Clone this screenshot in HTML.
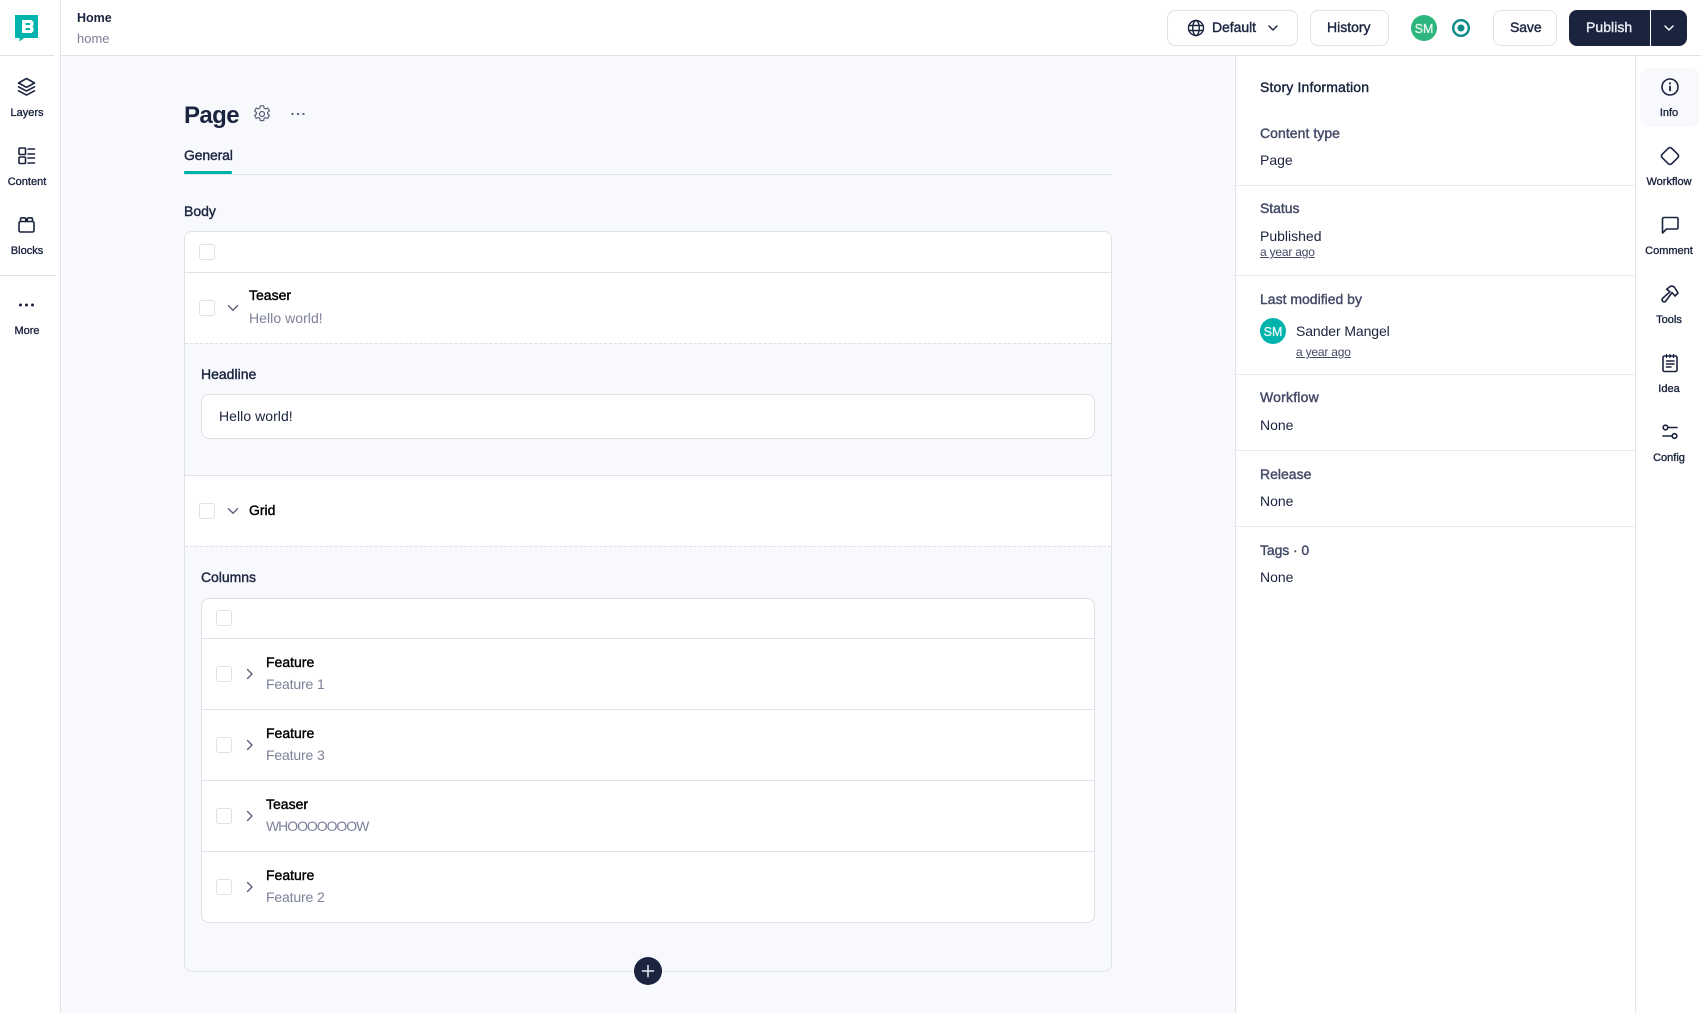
<!DOCTYPE html>
<html><head><meta charset="utf-8"><title>Page</title>
<style>
html,body{margin:0;padding:0;width:1701px;height:1013px;overflow:hidden;background:#fff}
body{position:relative;font-family:"Liberation Sans",Arial,sans-serif;color:#1b243f;font-size:14px}
.a,.t,.l,svg.i{position:absolute}
.t{white-space:nowrap;line-height:20px;height:20px}
.m{-webkit-text-stroke:.4px currentColor}
.s{font-size:11px;text-align:center;width:70px;-webkit-text-stroke:.35px currentColor}
.lab{color:#434a66;-webkit-text-stroke:.4px #434a66}
.bk{color:#000;-webkit-text-stroke:.4px #000}
.gr{color:#7d8199}
.n{letter-spacing:-.15px}
.l{background:#dfe1e8}
.cb{position:absolute;width:14px;height:14px;border:1px solid #dfe1e8;border-radius:3px;background:#fff}
.btn{position:absolute;box-sizing:border-box;top:10px;height:36px;border:1px solid #dfe1e8;border-radius:8px;background:#fff}
svg.i{fill:none;stroke:#1b243f;stroke-width:1.6;stroke-linecap:round;stroke-linejoin:round}
svg.c{stroke:#5b6079;stroke-width:1.4}
u{text-underline-offset:1px}
</style></head><body>

<!-- backgrounds -->
<div class="a" style="left:61px;top:56px;width:1174px;height:957px;background:#f8f9fd"></div>
<div class="a" style="left:60px;top:0;width:1px;height:1013px;background:#e3e5ee"></div>
<div class="l" style="left:61px;top:55px;width:1640px;height:1px"></div>
<div class="l" style="left:0;top:55px;width:54px;height:1px"></div>
<div class="l" style="left:0;top:275px;width:56px;height:1px"></div>
<div class="a" style="left:1235px;top:56px;width:1px;height:957px;background:#e3e5ee"></div>
<div class="a" style="left:1635px;top:56px;width:1px;height:957px;background:#e3e5ee"></div>

<!-- logo -->
<svg class="i" style="left:15px;top:15px;stroke:none" width="23" height="27" viewBox="0 0 23 27"><path fill="#00b3ad" d="M0 0H23V23H9L4.500 26.500V23H0Z"/><path fill="#fff" fill-rule="evenodd" d="M7 5H16.500L18.500 7V9.800L17.500 11.500L18.500 13V16L16.500 18H7ZM10.500 8V10H15V8ZM10.500 13V15H15V13Z"/></svg>

<!-- left nav -->
<svg class="i" style="left:16px;top:77px" width="21" height="21" viewBox="0 0 21 21"><path d="M10.500 1.500 18.500 6l-8 4.300L2.500 6Z"/><path d="M2.500 9.800l8 4.300 8-4.300"/><path d="M2.500 13.800l8 4.300 8-4.300"/></svg>
<div class="t s" style="left:-8px;top:103px">Layers</div>
<svg class="i" style="left:16px;top:146px" width="21" height="20" viewBox="0 0 21 20"><rect x="3" y="2" width="6.500" height="6.500" rx="1"/><rect x="3" y="11" width="6.500" height="6.500" rx="1"/><path d="M12 3h6.500M12 8h6.500M12 12h6.500M12 17h6.500" stroke-width="1.500"/></svg>
<div class="t s" style="left:-8px;top:172px">Content</div>
<svg class="i" style="left:16px;top:215px" width="21" height="20" viewBox="0 0 21 20"><rect x="3" y="6.500" width="15" height="10.500" rx="1.500"/><path d="M4.500 6.500V4.500Q4.500 2.800 6 2.800H8Q9.800 2.800 9.800 4.500V6.500M11.200 6.500V4.500Q11.200 2.800 13 2.800H15Q16.500 2.800 16.500 4.500V6.500"/></svg>
<div class="t s" style="left:-8px;top:241px">Blocks</div>
<svg class="i" style="left:16px;top:295px;stroke:none;fill:#1b243f" width="21" height="20" viewBox="0 0 21 20"><circle cx="4.500" cy="10" r="1.500"/><circle cx="10.500" cy="10" r="1.500"/><circle cx="16.500" cy="10" r="1.500"/></svg>
<div class="t s" style="left:-8px;top:321px">More</div>

<!-- top bar -->
<div class="t" style="left:77px;top:8px;font-size:12.500px;font-weight:bold">Home</div>
<div class="t gr" style="left:77px;top:29px;font-size:13px">home</div>

<div class="btn" style="left:1167px;width:131px"></div>
<svg class="i" style="left:1186px;top:18px;stroke-width:1.400" width="20" height="20" viewBox="0 0 20 20"><circle cx="10" cy="10" r="7.500"/><ellipse cx="10" cy="10" rx="3.300" ry="7.500"/><path d="M2.800 7.500h14.400M2.800 12.500h14.400"/></svg>
<div class="t m" style="left:1212px;top:17px;letter-spacing:-.05px">Default</div>
<svg class="i" style="left:1266px;top:22px;stroke-width:1.400" width="14" height="12" viewBox="0 0 14 12"><path d="M3 4l4 4 4-4"/></svg>
<div class="btn" style="left:1310px;width:79px"></div>
<div class="t m" style="left:1327px;top:17px">History</div>
<div class="a" style="left:1411px;top:15px;width:26px;height:26px;border-radius:50%;background:#2db57e;color:#e6f7ef;font-size:12.500px;line-height:28px;text-align:center;-webkit-text-stroke:.3px #e6f7ef">SM</div>
<svg class="i" style="left:1451px;top:18px;stroke:#0c8a88;stroke-width:2.400" width="20" height="20" viewBox="0 0 20 20"><circle cx="10" cy="10" r="7.800"/><circle cx="10" cy="10" r="3.500" fill="#0c8a88" stroke="none"/></svg>
<div class="btn" style="left:1493px;width:64px"></div>
<div class="t m" style="left:1510px;top:17px;letter-spacing:-.1px">Save</div>
<div class="a" style="left:1569px;top:10px;width:81px;height:36px;background:#1b243f;border-radius:8px 0 0 8px"></div>
<div class="a" style="left:1651px;top:10px;width:36px;height:36px;background:#1b243f;border-radius:0 8px 8px 0"></div>
<div class="t m" style="left:1586px;top:17px;color:#e9ebf2;letter-spacing:.05px">Publish</div>
<svg class="i" style="left:1662px;top:22px;stroke:#fff;stroke-width:1.400" width="14" height="12" viewBox="0 0 14 12"><path d="M3 4l4 4 4-4"/></svg>

<!-- page head -->
<div class="t" style="left:184px;top:101px;font-size:24px;line-height:30px;height:30px;font-weight:bold;letter-spacing:-.6px">Page</div>
<svg class="i c" style="left:253px;top:105px;stroke-width:1.200" width="18" height="18" viewBox="0 0 18 18"><path d="M7.300.8h3.400l.4 2.300 1.400.8 2.200-.9 1.700 2.900-1.800 1.500v1.600l1.800 1.500-1.700 2.900-2.200-.9-1.400.8-.4 2.300H7.300l-.4-2.300-1.400-.8-2.200.9-1.700-2.900 1.800-1.500V7.400L1.600 5.900l1.700-2.900 2.200.9 1.400-.8Z"/><circle cx="9" cy="9" r="2.500"/></svg>
<svg class="i" style="left:289px;top:109px;stroke:none;fill:#5b6079" width="18" height="10" viewBox="0 0 18 10"><circle cx="3.500" cy="5" r="1.150"/><circle cx="9" cy="5" r="1.150"/><circle cx="14.500" cy="5" r="1.150"/></svg>
<div class="t m" style="left:184px;top:145px;letter-spacing:-.15px">General</div>
<div class="l" style="left:184px;top:174px;width:928px;height:1px"></div>
<div class="a" style="left:184px;top:171px;width:48px;height:3px;background:#00b3ad;border-radius:1px"></div>
<div class="t m" style="left:184px;top:201px">Body</div>

<!-- outer box -->
<div class="a" style="left:184px;top:231px;width:926px;height:739px;border:1px solid #dfe1e8;border-radius:8px"></div>
<div class="a" style="left:185px;top:232px;width:926px;height:111px;background:#fff;border-radius:7px 7px 0 0"></div>
<div class="a" style="left:185px;top:476px;width:926px;height:70px;background:#fff"></div>
<div class="l" style="left:185px;top:272px;width:926px;height:1px"></div>
<div class="cb" style="left:199px;top:244px"></div>
<div class="cb" style="left:199px;top:300px"></div>
<svg class="i c" style="left:226px;top:302px" width="14" height="12" viewBox="0 0 14 12"><path d="M2.500 3.800l4.500 4.500 4.500-4.500"/></svg>
<div class="t bk" style="left:249px;top:285px">Teaser</div>
<div class="t gr" style="left:249px;top:308px;letter-spacing:.05px">Hello world!</div>
<div class="a" style="left:185px;top:343px;width:926px;border-top:1px dashed #dfe1e8"></div>
<div class="t m" style="left:201px;top:364px">Headline</div>
<div class="a" style="left:201px;top:394px;width:892px;height:43px;background:#fff;border:1px solid #dfe1e8;border-radius:8px"></div>
<div class="t" style="left:219px;top:406px;letter-spacing:.05px">Hello world!</div>
<div class="l" style="left:185px;top:475px;width:926px;height:1px"></div>
<div class="cb" style="left:199px;top:503px"></div>
<svg class="i c" style="left:226px;top:505px" width="14" height="12" viewBox="0 0 14 12"><path d="M2.500 3.800l4.500 4.500 4.500-4.500"/></svg>
<div class="t bk" style="left:249px;top:500px">Grid</div>
<div class="a" style="left:185px;top:546px;width:926px;border-top:1px dashed #dfe1e8"></div>
<div class="t m" style="left:201px;top:567px;letter-spacing:-.05px">Columns</div>

<!-- inner box -->
<div class="a" style="left:201px;top:598px;width:892px;height:323px;background:#fff;border:1px solid #dfe1e8;border-radius:8px"></div>
<div class="cb" style="left:216px;top:610px"></div>
<div class="l" style="left:202px;top:638px;width:892px;height:1px"></div>
<div class="l" style="left:202px;top:709px;width:892px;height:1px"></div>
<div class="l" style="left:202px;top:780px;width:892px;height:1px"></div>
<div class="l" style="left:202px;top:851px;width:892px;height:1px"></div>

<div class="cb" style="left:216px;top:666px"></div>
<svg class="i c" style="left:243px;top:667px" width="14" height="14" viewBox="0 0 14 14"><path d="M4.500 2.500l4.500 4.500-4.500 4.500"/></svg>
<div class="t bk" style="left:266px;top:652px">Feature</div>
<div class="t gr n" style="left:266px;top:674px">Feature 1</div>

<div class="cb" style="left:216px;top:737px"></div>
<svg class="i c" style="left:243px;top:738px" width="14" height="14" viewBox="0 0 14 14"><path d="M4.500 2.500l4.500 4.500-4.500 4.500"/></svg>
<div class="t bk" style="left:266px;top:723px">Feature</div>
<div class="t gr n" style="left:266px;top:745px">Feature 3</div>

<div class="cb" style="left:216px;top:808px"></div>
<svg class="i c" style="left:243px;top:809px" width="14" height="14" viewBox="0 0 14 14"><path d="M4.500 2.500l4.500 4.500-4.500 4.500"/></svg>
<div class="t bk" style="left:266px;top:794px">Teaser</div>
<div class="t gr" style="left:266px;top:816px;letter-spacing:-1.050px">WHOOOOOOOW</div>

<div class="cb" style="left:216px;top:879px"></div>
<svg class="i c" style="left:243px;top:880px" width="14" height="14" viewBox="0 0 14 14"><path d="M4.500 2.500l4.500 4.500-4.500 4.500"/></svg>
<div class="t bk" style="left:266px;top:865px">Feature</div>
<div class="t gr n" style="left:266px;top:887px">Feature 2</div>

<div class="a" style="left:634px;top:957px;width:28px;height:28px;border-radius:50%;background:#1b243f"></div>
<svg class="i" style="left:640px;top:963px;stroke:#e9ebf2;stroke-width:1.500" width="16" height="16" viewBox="0 0 16 16"><path d="M8 2.500v11M2.500 8h11"/></svg>

<!-- info panel -->
<div class="t m" style="left:1260px;top:77px;letter-spacing:.15px">Story Information</div>
<div class="t lab" style="left:1260px;top:123px;letter-spacing:.05px">Content type</div>
<div class="t" style="left:1260px;top:150px">Page</div>
<div class="l" style="left:1236px;top:185px;width:399px;height:1px;background:#e9eaee"></div>
<div class="t lab" style="left:1260px;top:198px;letter-spacing:-.05px">Status</div>
<div class="t" style="left:1260px;top:226px">Published</div>
<div class="t" style="left:1260px;top:242px;font-size:12px;color:#434a66;letter-spacing:-.2px"><u>a year ago</u></div>
<div class="l" style="left:1236px;top:275px;width:399px;height:1px;background:#e9eaee"></div>
<div class="t lab" style="left:1260px;top:289px">Last modified by</div>
<div class="a" style="left:1260px;top:318px;width:26px;height:26px;border-radius:50%;background:#00b3ad;color:#e6f7f6;font-size:12.500px;line-height:28px;text-align:center;-webkit-text-stroke:.3px #e6f7f6">SM</div>
<div class="t" style="left:1296px;top:321px;letter-spacing:-.1px">Sander Mangel</div>
<div class="t" style="left:1296px;top:342px;font-size:12px;color:#434a66;letter-spacing:-.2px"><u>a year ago</u></div>
<div class="l" style="left:1236px;top:374px;width:399px;height:1px;background:#e9eaee"></div>
<div class="t lab" style="left:1260px;top:387px;letter-spacing:.2px">Workflow</div>
<div class="t" style="left:1260px;top:415px">None</div>
<div class="l" style="left:1236px;top:450px;width:399px;height:1px;background:#e9eaee"></div>
<div class="t lab" style="left:1260px;top:464px">Release</div>
<div class="t" style="left:1260px;top:491px">None</div>
<div class="l" style="left:1236px;top:526px;width:399px;height:1px;background:#e9eaee"></div>
<div class="t lab" style="left:1260px;top:540px;letter-spacing:-.1px">Tags · 0</div>
<div class="t" style="left:1260px;top:567px">None</div>

<!-- right nav -->
<div class="a" style="left:1640px;top:68px;width:59px;height:59px;border-radius:8px;background:#f8f9fd"></div>
<svg class="i" style="left:1660px;top:77px" width="21" height="20" viewBox="0 0 21 20"><circle cx="10" cy="10" r="8"/><path d="M10 9.500v4" stroke-width="1.800"/><path d="M10 6.300v.2" stroke-width="2"/></svg>
<div class="t s" style="left:1634px;top:103px">Info</div>
<svg class="i" style="left:1660px;top:146px" width="21" height="20" viewBox="0 0 21 20"><path d="M8.300 2.300Q10 .8 11.700 2.300L17.800 8.300Q19.300 10 17.800 11.700L11.700 17.700Q10 19.200 8.300 17.700L2.200 11.700Q.7 10 2.200 8.300Z"/></svg>
<div class="t s" style="left:1634px;top:172px">Workflow</div>
<svg class="i" style="left:1660px;top:215px" width="21" height="20" viewBox="0 0 21 20"><path d="M2.500 18V4Q2.500 2.500 4 2.500H16.500Q18 2.500 18 4V12.500Q18 14 16.500 14H6.500Z"/></svg>
<div class="t s" style="left:1634px;top:241px">Comment</div>
<svg class="i" style="left:1659px;top:284px" width="21" height="20" viewBox="0 0 21 20"><path d="M7.700 5.300L11.500 2.300Q14 1.500 16 4L19 9 16 12 13 8.500 6.500 17.500Q5 18.500 3.800 17.300L3.200 16.500Q2.500 15 4 14L11 7.700Z"/></svg>
<div class="t s" style="left:1634px;top:310px">Tools</div>
<svg class="i" style="left:1659px;top:353px" width="21" height="20" viewBox="0 0 21 20"><rect x="4" y="3" width="14" height="15.500" rx="1.500"/><path d="M7.500 1.500v3M11 1.500v3M14.500 1.500v3" stroke-width="1.300"/><path d="M7.500 8h7.500M7.500 11h7.500M7.500 14h4.500" stroke-width="1.500"/></svg>
<div class="t s" style="left:1634px;top:379px">Idea</div>
<svg class="i" style="left:1659px;top:422px" width="21" height="20" viewBox="0 0 21 20"><circle cx="6.500" cy="5.500" r="2.300"/><path d="M9 5.500h9"/><circle cx="15.500" cy="14" r="2.300"/><path d="M4 14h9"/></svg>
<div class="t s" style="left:1634px;top:448px">Config</div>

</body></html>
